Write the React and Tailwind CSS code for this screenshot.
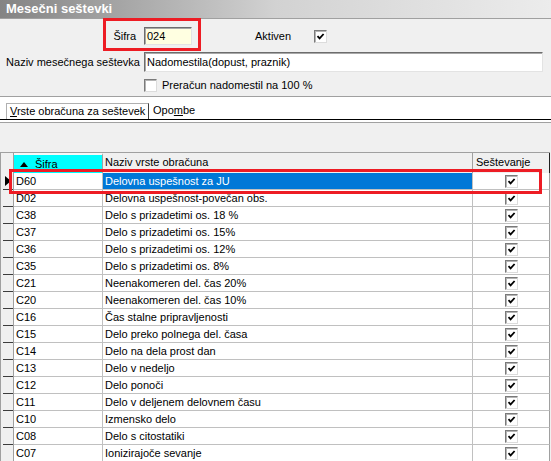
import React from "react";

const rows = [
  ["D60", "Delovna uspešnost za JU"],
  ["D02", "Delovna uspešnost-povečan obs."],
  ["C38", "Delo s prizadetimi os. 18 %"],
  ["C37", "Delo s prizadetimi os. 15%"],
  ["C36", "Delo s prizadetimi os. 12%"],
  ["C35", "Delo s prizadetimi os. 8%"],
  ["C21", "Neenakomeren del. čas 20%"],
  ["C20", "Neenakomeren del. čas 10%"],
  ["C16", "Čas stalne pripravljenosti"],
  ["C15", "Delo preko polnega del. časa"],
  ["C14", "Delo na dela prost dan"],
  ["C13", "Delo v nedeljo"],
  ["C12", "Delo ponoči"],
  ["C11", "Delo v deljenem delovnem času"],
  ["C10", "Izmensko delo"],
  ["C08", "Delo s citostatiki"],
  ["C07", "Ionizirajoče sevanje"],
];

const Box = ({ checked = true, className = "" }) => (
  <div
    className={
      "flex h-[13px] w-[13px] shrink-0 items-center justify-center border border-t-[#7a7a7a] border-l-[#7a7a7a] border-r-[#dcdcdc] border-b-[#dcdcdc] bg-white shadow-[inset_1px_1px_0_#b4b4b4] " +
      className
    }
  >
    {checked && (
      <svg width="9" height="9" viewBox="0 0 9 9">
        <path d="M1.5 4.2 L3.6 6.4 L7.6 2" fill="none" stroke="#000" strokeWidth="1.8" />
      </svg>
    )}
  </div>
);

const inputCls =
  "border border-t-[#6d6d6d] border-l-[#6d6d6d] border-r-[#e3e3e3] border-b-[#e3e3e3] shadow-[inset_1px_1px_0_#a8a8a8] pl-[2px]";

export default function App() {
  return (
    <div className="relative h-[461px] w-[551px] overflow-hidden bg-[#f0f0f0] font-['Liberation_Sans',Arial,sans-serif] text-[11px] text-black">
      {/* title */}
      <div className="h-[19px] border-b border-[#a0a0a0] bg-linear-to-r from-[#848484] via-[#d2d2d2] to-[#ececec] pl-[6px] text-[13px] font-bold leading-[18px] text-white">
        Mesečni seštevki
      </div>

      {/* form */}
      <div className="h-[78px] border-b border-[#a0a0a0] pt-[8px]">
        <div className="flex h-[18px] items-center">
          <span className="w-[144px] pr-[8px] text-right">Šifra</span>
          <div className={"h-[18px] w-[48px] bg-[#ffffe1] leading-[16px] " + inputCls}>024</div>
          <span className="ml-[63px]">Aktiven</span>
          <Box className="ml-[23px]" />
        </div>
        <div className="mt-[7px] flex h-[20px] items-center">
          <span className="w-[144px] pr-[4px] text-right">Naziv mesečnega seštevka</span>
          <div className={"h-[20px] w-[399px] bg-white leading-[18px] " + inputCls}>
            Nadomestila(dopust, praznik)
          </div>
        </div>
        <div className="mt-[5px] flex items-center pl-[144px]">
          <Box checked={false} />
          <span className="ml-[5px]">Preračun nadomestil na 100 %</span>
        </div>
      </div>

      {/* tabs */}
      <div className="flex h-[23px] items-end border-b border-black bg-white pl-[6px]">
        <div className="h-[16px] w-[143px] border-l border-t border-r border-l-[#b0b0b0] border-t-[#b0b0b0] border-r-[#404040] pl-[3px] leading-[14px]">
          <u>V</u>rste obračuna za seštevek
        </div>
        <div className="h-[16px] pl-[4px] leading-[14px]">
          Opo<u>m</u>be
        </div>
      </div>
      <div className="h-[2px] bg-white" />
      <div className="h-[30px] border-t border-[#a0a0a0]" />

      {/* grid */}
      <div className="w-[550px] border-l border-t border-[#a0a0a0]">
        <div className="grid h-[20px] grid-cols-[13px_89px_370px_77px] leading-[18px]">
          <div className="border-r border-b border-[#a0a0a0] bg-[#f0f0f0]" />
          <div className="flex items-center border-r border-b border-[#a0a0a0] border-t-2 border-t-[#f8f8f8] bg-[#00ffff] pl-[6px]">
            <svg width="8" height="5" viewBox="0 0 8 5" className="mr-[7px]">
              <path d="M0 5 L4 0 L8 5 Z" fill="#000" />
            </svg>
            Šifra
          </div>
          <div className="border-r border-b border-[#a0a0a0] bg-[#f0f0f0] pl-[2px]">Naziv vrste obračuna</div>
          <div className="border-r border-b border-r-[#202020] border-b-[#a0a0a0] bg-[#f0f0f0] pl-[3px]">Seštevanje</div>
        </div>
        {rows.map(([code, name], i) => {
          const sel = i === 0;
          return (
            <div key={code} className="grid h-[17px] grid-cols-[13px_89px_370px_77px] leading-[16px]">
              <div className="flex flex-col justify-end border-r border-[#a0a0a0] bg-[#f0f0f0]">
                <div className="relative ml-[2px] flex-1 border-b border-[#3c3c3c]">
                  {sel && (
                    <svg width="6" height="10" viewBox="0 0 6 10" className="absolute left-[2px] top-[3px]">
                      <path d="M0 0 L6 5 L0 10 Z" fill="#000" />
                    </svg>
                  )}
                </div>
              </div>
              <div className="border-r border-b border-[#c0c0c0] bg-white pl-[2px]">{code}</div>
              <div
                className={
                  "border-r border-b border-[#c0c0c0] pl-[2px] " +
                  (sel ? "bg-[#0078d7] text-white" : "bg-white")
                }
              >
                {name}
              </div>
              <div className="flex items-center justify-center border-r border-b border-r-[#a0a0a0] border-b-[#c0c0c0] bg-white">
                <Box />
              </div>
            </div>
          );
        })}
      </div>

      {/* red highlight marks */}
      <div className="pointer-events-none absolute left-[103px] top-[18px] h-[33px] w-[98px] border-[3px] border-[#ed1c24]" />
      <div className="pointer-events-none absolute left-[9px] top-[169px] h-[25px] w-[533px] border-[3px] border-[#ed1c24]" />
    </div>
  );
}
